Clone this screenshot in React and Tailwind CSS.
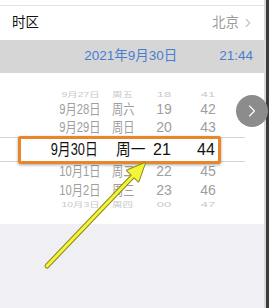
import {ChevronRight} from 'lucide-react';

const rows = [
    {d: '9月27日', w: '周五', h: '18', m: '41', kind: 'far', hgt: 'h-[12px]'},
    {d: '9月28日', w: '周六', h: '19', m: '42', kind: 'near', hgt: 'h-[17px]'},
    {d: '9月29日', w: '周日', h: '20', m: '43', kind: 'near', hgt: 'h-[20px]'},
    {d: '9月30日', w: '周一', h: '21', m: '44', kind: 'sel', hgt: 'h-[25px]'},
    {d: '10月1日', w: '周二', h: '22', m: '45', kind: 'near', hgt: 'h-[18px]'},
    {d: '10月2日', w: '周三', h: '23', m: '46', kind: 'near', hgt: 'h-[19px]'},
    {d: '10月3日', w: '周四', h: '00', m: '47', kind: 'far', hgt: 'h-[10px]'},
];

const PickerRow = ({r}) => {
    const sel = r.kind === 'sel';
    const tone = sel
        ? 'text-[16px] text-[#111] border-y border-[#d4d4d4] mr-[19px]'
        : r.kind === 'near'
            ? 'text-[14px] text-[#9e9e9e]'
            : 'text-[13px] text-[#c8c8c8] scale-y-[0.55]';
    return (
        <div className={`flex items-center leading-none whitespace-nowrap ${r.hgt} ${tone}`}>
            <span className={`flex justify-end ${sel ? 'w-[98px]' : 'w-[100px]'}`}>
                <span className="inline-block origin-right scale-x-[0.8]">{r.d}</span>
            </span>
            <span className={`w-[49px] ${sel ? 'pl-[18px]' : 'pl-[12px]'}`}>
                <span className={`inline-block origin-left ${sel ? 'scale-x-[0.92]' : 'scale-x-[0.8]'}`}>{r.w}</span>
            </span>
            <span className="w-[30px] text-center">{r.h}</span>
            <span className="ml-[14px] w-[30px] text-center">{r.m}</span>
        </div>
    );
};

export default function App() {
    return (
        <div
            className="relative flex w-[269px] h-[308px] overflow-hidden bg-[#333]"
            style={{fontFamily: '"Liberation Sans", "Noto Sans CJK SC", sans-serif'}}
        >
            <div className="flex flex-col w-[264px] bg-[#efeff4]">
                <div className="h-[6px] bg-white border-b border-[#e3e3e3]"/>
                <div className="h-[34px] bg-white flex items-center justify-between pl-3 pr-[9px]">
                    <span className="text-[13.5px] text-[#111]">时区</span>
                    <span className="flex items-center gap-[2px] text-[13.5px] text-[#9c9c9c]">
                        北京
                        <ChevronRight className="w-[14px] h-[14px] text-[#c4c4c4]" strokeWidth={2}/>
                    </span>
                </div>
                <div className="h-[33px] bg-[#d6d6d6] flex items-center justify-end pr-[11px] text-[13.5px] text-[#4a7ed0]">
                    <span className="mr-[42px]">2021年9月30日</span>
                    <span>21:44</span>
                </div>
                <div className="h-[151px] bg-white pt-[15px] flex flex-col">
                    {rows.map((r) => <PickerRow key={r.d} r={r}/>)}
                </div>
            </div>
            <div className="w-[2px] bg-[#d8d8d8]"/>
            <div className="flex-1 bg-[#3a3a3a]"/>

            <div
                className="absolute left-[18px] top-[136px] w-[203px] h-[28px] border-[3px] border-[#e9852b] rounded-[2px] shadow-[0_1px_3px_rgba(0,0,0,0.35)]"/>

            <div className="absolute left-[236px] top-[95px] w-8 h-8 rounded-full bg-[#8c8c8c] flex items-center justify-center">
                <ChevronRight className="w-5 h-5 text-white" strokeWidth={1.3}/>
            </div>

            <svg className="absolute left-0 top-0" width="269" height="308" viewBox="0 0 269 308">
                <line x1="47" y1="266" x2="134" y2="175" stroke="#8a8a1a" strokeWidth="5" strokeLinecap="round"/>
                <polygon points="145,163 138.5,181.5 127,170.5" fill="#8a8a1a" stroke="#8a8a1a" strokeWidth="2" strokeLinejoin="round"/>
                <line x1="47" y1="266" x2="134" y2="175" stroke="#f4f43a" strokeWidth="3" strokeLinecap="round"/>
                <polygon points="145,163 138.5,181.5 127,170.5" fill="#f4f43a"/>
            </svg>
        </div>
    );
}
